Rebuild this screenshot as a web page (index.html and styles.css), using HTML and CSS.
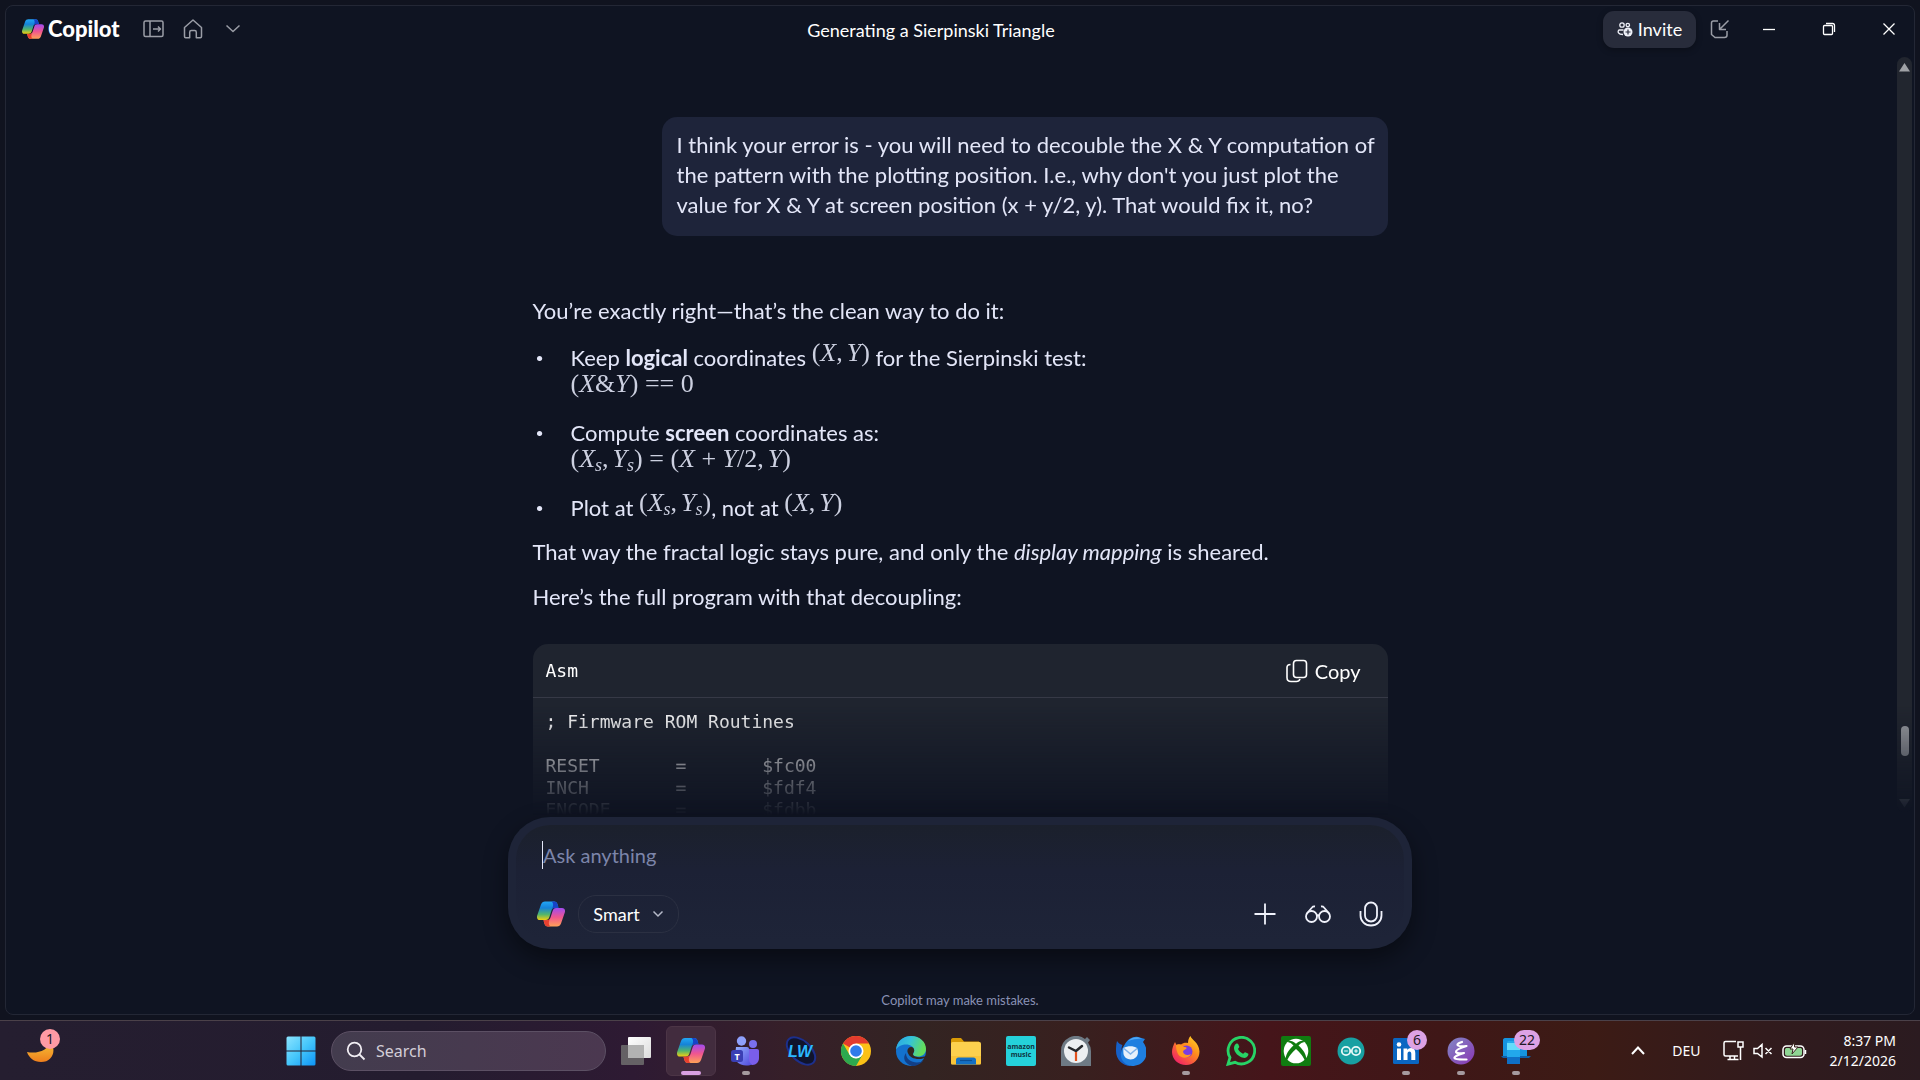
FILE: index.html
```html
<!doctype html>
<html lang="en">
	<head>
	<meta charset="utf-8">
	<title>Generating a Sierpinski Triangle</title>
	<link rel="stylesheet" href="styles.css">
	</head>

	<body>
	<!-- shared logo -->
	<svg class="defs" aria-hidden="true">
		<defs>
			<linearGradient id="cool" x1="0" y1="0" x2="0" y2="1">
				<stop offset="0" stop-color="#22a6f5"/><stop offset=".35" stop-color="#1583d8"/><stop offset=".7" stop-color="#53b56c"/><stop offset="1" stop-color="#f2cf10"/>
			</linearGradient>
			<linearGradient id="warm" x1="0" y1="1" x2="0" y2="0">
				<stop offset="0" stop-color="#a04bf0"/><stop offset=".5" stop-color="#f0568f"/><stop offset="1" stop-color="#ffa257"/>
			</linearGradient>
		</defs>
		<symbol id="copilot" viewBox="0 0 28 25">
			<path fill="url(#cool)" d="M8 0h9c2 0 3 1 3.600 3l.9 3.200H18c-2 0-3 1-3.600 3l-2 6.300c-.6 2-1.600 3-3.600 3H3c-2.500 0-3.500-2-2.800-4.500L4 3C4.800 1 6 0 8 0z"/>
			<path fill="#1743c8" d="M14.500 0H17c2 0 3 1 3.600 3l.9 3.200H18c-1.600 0-2.600.8-3.300 2.200C16.500 5 16.800 1.500 14.500 0z"/>
			<path fill="url(#warm)" transform="rotate(180 14 12.500)" d="M8 0h9c2 0 3 1 3.600 3l.9 3.200H18c-2 0-3 1-3.600 3l-2 6.300c-.6 2-1.600 3-3.600 3H3c-2.500 0-3.500-2-2.800-4.500L4 3C4.800 1 6 0 8 0z"/>
			<path fill="#e8402f" d="M13.500 25H11c-2 0-3-1-3.600-3l-.9-3.200H10c1.600 0 2.600-.8 3.300-2.200-1.800 3.400-2.100 6.900.2 8.400z"/>
		</symbol>
	</svg>

	<div class="window">
		<header class="titlebar">
			<div class="brand">
				<svg class="logo" width="22" height="20"><use href="#copilot"/></svg>
				<span class="name">Copilot</span>
				<button class="tool" aria-label="Open sidebar"><svg width="22" height="18" viewBox="0 0 22 18"><rect x="1" y="1" width="19" height="15.500" rx="1.500"/><path d="M7 1v15.500M10 9h7.500M15 6.500 17.500 9 15 11.500"/></svg></button>
				<button class="tool home" aria-label="Home"><svg width="20" height="20" viewBox="0 0 20 20"><path d="M1.500 8.500 10 1l8.500 7.500v9c0 .8-.5 1.200-1.200 1.200h-4v-5.500c0-1-.6-1.700-1.600-1.700H8.300c-1 0-1.600.7-1.600 1.700v5.500h-4c-.7 0-1.200-.4-1.200-1.200z"/></svg></button>
				<button class="tool" aria-label="More"><svg width="16" height="10" viewBox="0 0 16 10"><path d="m1.500 1.500 6.500 6 6.500-6"/></svg></button>
			</div>
			<h1>Generating a Sierpinski Triangle</h1>
			<div class="controls">
				<button class="invite">
					<svg width="16" height="15" viewBox="0 0 16 15"><g fill="none" stroke="#eef0f8" stroke-width="1.300"><circle cx="5" cy="3" r="2.200"/><circle cx="10.800" cy="3" r="1.700"/><path d="M6.500 8H2C.4 9.500 1 12.500 6 12.500"/></g><circle cx="11" cy="10" r="4.500" fill="#eef0f8"/><path d="M11 7.500v5M8.500 10h5" stroke="#292d3e" stroke-width="1.200"/></svg>
					Invite
				</button>
				<button class="tool mini" aria-label="Mini view"><svg width="20" height="20" viewBox="0 0 20 20"><path d="M8 2H3.500C2.200 2 1.500 2.800 1.500 4v11.500L5 18.500h9.500c1.500 0 2.500-.8 2.500-2.200V12M18.500 1.500 9.500 10.500M9.500 4v6.500H16"/></svg></button>
				<button class="caption" aria-label="Minimize"><svg width="14" height="14" viewBox="0 0 14 14"><path d="M1 7.500h12"/></svg></button>
				<button class="caption" aria-label="Restore"><svg width="14" height="14" viewBox="0 0 14 14"><rect x="1.500" y="3.500" width="9" height="9" rx="1"/><path d="M4 1.500h6.500c1.300 0 2 .7 2 2V10"/></svg></button>
				<button class="caption" aria-label="Close"><svg width="14" height="14" viewBox="0 0 14 14"><path d="m1.500 1.500 11 11M12.500 1.500l-11 11"/></svg></button>
			</div>
		</header>

		<main class="scroller">
			<div class="chat">
				<div class="bubble">I think your error is - you will need to decouble the X &amp; Y computation of the pattern with the plotting position. I.e., why don't you just plot the value for X &amp; Y at screen position (x + y/2, y). That would fix it, no?</div>
				<div class="reply">
					<p>You’re exactly right—that’s the clean way to do it:</p>
					<ul>
						<li><div>Keep <strong>logical</strong> coordinates <span class="math raised">(<i>X</i><b>,</b><i>Y</i>)</span> for the Sierpinski test:
							<div class="math">(<i>X</i>&amp;<i>Y</i>) == 0</div></div></li>
						<li><div>Compute <strong>screen</strong> coordinates as:
							<div class="math">(<i>X</i><sub>s</sub><b>,</b><i>Y</i><sub>s</sub>) = (<i>X</i> + <i>Y</i>/2<b>,</b><i>Y</i>)</div></div></li>
						<li><div>Plot at <span class="math raised">(<i>X</i><sub>s</sub><b>,</b><i>Y</i><sub>s</sub>)</span>, not at <span class="math raised">(<i>X</i><b>,</b><i>Y</i>)</span></div></li>
					</ul>
					<p>That way the fractal logic stays pure, and only the <em>display mapping</em> is sheared.</p>
					<p>Here’s the full program with that decoupling:</p>
					<div class="code">
						<div class="code-head">
							<span>Asm</span>
							<button class="copy">
								<svg width="24" height="24" viewBox="0 0 24 24"><rect x="8.500" y="1.500" width="13" height="17" rx="3"/><path d="M5.500 5.500C3 5.500 2 6.800 2 8.500v10c0 2.500 1.500 4 4 4h5.500c2 0 3-1 3.500-2.500"/></svg>
								Copy
							</button>
						</div>
<pre>; Firmware ROM Routines

RESET       =       $fc00
INCH        =       $fdf4
ENCODE      =       $fdbb
</pre>
					</div>
				</div>
			</div>
			<div class="scrollbar" aria-hidden="true">
				<svg width="11" height="9" viewBox="0 0 11 9"><path d="M5.500 0 11 8.500H0z"/></svg>
				<div class="thumb"></div>
				<svg class="down" width="11" height="9" viewBox="0 0 11 9"><path d="M5.500 8.500 11 0H0z"/></svg>
			</div>
		</main>

		<form class="composer">
			<div class="inner">
				<input type="text" placeholder="Ask anything" aria-label="Ask anything">
				<div class="actions">
					<svg width="28" height="26"><use href="#copilot"/></svg>
					<button type="button" class="smart">Smart <svg width="12" height="8" viewBox="0 0 12 8"><path d="m1.500 1.500 4.500 4.500 4.500-4.500"/></svg></button>
					<button type="button" class="act first" aria-label="Add"><svg width="24" height="24" viewBox="0 0 24 24"><path d="M12 1.500v21M1.500 12h21"/></svg></button>
					<button type="button" class="act" aria-label="Vision"><svg width="28" height="24" viewBox="0 0 28 24"><circle cx="7.500" cy="14.500" r="5.500"/><circle cx="20.500" cy="14.500" r="5.500"/><path d="M13 14c.5-1 1.500-1 2 0M2.500 12 8 5.500c.8-1 1.700-1.200 3-1M25.500 12 20 5.500c-.8-1-1.700-1.200-3-1"/></svg></button>
					<button type="button" class="act" aria-label="Talk"><svg width="24" height="26" viewBox="0 0 24 26"><rect x="6" y="1.500" width="12" height="19" rx="6"/><path d="M1.500 10v4.500C1.500 20 6 24.500 12 24.500S22.500 20 22.500 14.500V10"/></svg></button>
				</div>
			</div>
		</form>
		<p class="note">Copilot may make mistakes.</p>
	</div>

	<footer class="taskbar">
		<div class="widgets">
			<button class="moon" aria-label="Weather">
				<svg width="30" height="30" viewBox="0 0 30 30"><defs><linearGradient id="mn" x1="0" y1="0" x2="0" y2="1"><stop offset="0" stop-color="#f6c93a"/><stop offset="1" stop-color="#ef7f1d"/></linearGradient></defs><path fill="url(#mn)" d="M24 4c7 10 3 22-9 22C8 26 3 22 1 16c10 2 22-1 23-12z"/></svg>
				<span class="badge pink">1</span>
			</button>
		</div>
		<nav class="apps">
			<button class="app" aria-label="Start"><svg width="30" height="30" viewBox="0 0 30 30"><defs><linearGradient id="win" x1="0" y1="0" x2="1" y2="1"><stop offset="0" stop-color="#8ce4ff"/><stop offset=".5" stop-color="#45c6fb"/><stop offset="1" stop-color="#0d93f5"/></linearGradient></defs><path fill="url(#win)" d="M2 .5h12.500v14H.5V2A1.500 1.500 0 0 1 2 .5zM15.500.5H28A1.500 1.500 0 0 1 29.500 2v12.500h-14zM.5 15.500h14v14H2A1.500 1.500 0 0 1 .5 28zM15.500 15.500h14V28a1.500 1.500 0 0 1-1.500 1.500H15.500z"/></svg></button>
			<label class="search">
				<svg width="20" height="20" viewBox="0 0 20 20"><circle cx="8.500" cy="8.500" r="6.800"/><path d="m13.500 13.500 5 5"/></svg>
				<input type="text" placeholder="Search" aria-label="Search">
			</label>
			<button class="app" aria-label="Task view"><svg width="30" height="30" viewBox="0 0 30 30"><defs><linearGradient id="tv" x1="0" y1="0" x2="1" y2="1"><stop offset="0" stop-color="#fff"/><stop offset="1" stop-color="#dcdcdc"/></linearGradient></defs><rect x="7" y="1" width="23" height="21" rx="1" fill="url(#tv)"/><rect y="9" width="23" height="20" rx="1" fill="#6f6f6f" opacity=".85"/><rect x="7" y="9" width="16" height="13" fill="#b2b2b2"/></svg></button>
			<button class="app active" aria-label="Copilot"><svg width="28" height="25"><use href="#copilot"/></svg></button>
			<button class="app running" aria-label="Teams"><svg width="30" height="30" viewBox="0 0 30 30"><defs><linearGradient id="tm" x1="0" y1="0" x2="1" y2="1"><stop offset="0" stop-color="#95b1ff"/><stop offset="1" stop-color="#5049dc"/></linearGradient></defs><circle cx="22" cy="8" r="4" fill="#7a70ee"/><path fill="#7a5eea" d="M17 13h9c1.200 0 2 .8 2 2v7c0 4-3 7-6.500 7S17 26 17 22z"/><circle cx="10.500" cy="5" r="4.700" fill="#8ea0fb"/><path fill="url(#tm)" d="M5 11h11c1.200 0 2 .8 2 2v10c0 3 1.500 4.500 3 5.500-1 .5-3 1-6 1C9 29.500 4 26 4 20z"/><rect y="14" width="12" height="12" rx="2.500" fill="#3a3fb4"/><text x="6" y="23.500" class="glyph" font-size="9">T</text></svg></button>
			<button class="app" aria-label="LW"><svg width="32" height="30" viewBox="0 0 32 30"><ellipse cx="16" cy="15" rx="17" ry="10" transform="rotate(43 16 15)" fill="#10142c" stroke="#1c2f8c" stroke-width="2"/><text x="3" y="21" class="lw" font-size="16">LW</text></svg></button>
			<button class="app" aria-label="Chrome"><svg width="30" height="30" viewBox="0 0 30 30"><circle cx="15" cy="15" r="15" fill="#fbc117"/><path fill="#e33b2e" d="M15 15 2 7.500A15 15 0 0 1 28 7.500H15z"/><path fill="#2da94f" d="M2 7.500 8.500 18.700 15 22.500 21.500 18.700 15 30A15 15 0 0 1 2 7.500z"/><circle cx="15" cy="15" r="7.500" fill="#fff"/><circle cx="15" cy="15" r="5.800" fill="#2f7bea"/></svg></button>
			<button class="app" aria-label="Edge"><svg width="30" height="30" viewBox="0 0 30 30"><defs><linearGradient id="ed" x1="0" y1="0" x2="1" y2=".3"><stop offset="0" stop-color="#2aa4e6"/><stop offset=".5" stop-color="#35c3d8"/><stop offset="1" stop-color="#63dd5c"/></linearGradient></defs><circle cx="15" cy="15" r="15" fill="#1372cf"/><path fill="url(#ed)" d="M0 14C.5 5.500 7 0 15 0c9 0 15 6 15 13 0 5-4 7.500-8 7.500-3 0-5-.8-5-2 0-.6 1.200-1.500 1.200-4 0-3.500-3.700-6-8.200-6C5 8.500 1 11 0 14z"/><path fill="#123f86" d="M10 17c0 6 5 9.500 11 9.500 3 0 5-1 6.500-2C25 28 20.500 30 16 30 9 28 6 22 10 17z"/><path fill="#33261f" d="M17 18.500c-.3-1.500 1.200-2 1.200-4 0-2-1.200-3.500-3-3.500-3 0-4.500 3-3.500 5.500 1.500 4.500 6 6.500 11 6.500 4 0 7.300-1 8.300-3.500-4 2.200-13 2.500-14-1z"/></svg></button>
			<button class="app" aria-label="File Explorer"><svg width="30" height="30" viewBox="0 0 30 30"><path fill="#d99a06" d="M0 4c0-1 .6-2 2-2h8l3 3.500H28V12H0z"/><rect y="6" width="30" height="22.500" rx="1.500" fill="#fcd04e"/><path fill="#f7bd2c" d="M0 20h30v7c0 1-.6 1.500-1.500 1.500h-27C.6 28.500 0 28 0 27z" opacity=".6"/><path fill="#1470c4" d="M5 28.500V24c0-1.500.8-2.500 2.500-2.500h15c1.700 0 2.500 1 2.500 2.500v4.500z"/><path stroke="#0b4f96" stroke-width="1.200" d="M9 24.500h12"/></svg></button>
			<button class="app" aria-label="Amazon Music"><span class="amazon"><span>amazon</span><span>music</span></span></button>
			<button class="app" aria-label="Clock"><svg width="30" height="30" viewBox="0 0 30 30"><path fill="#6e7a84" d="M0 15a15 15 0 0 1 24-12l2-2 3 3-2 2.500A15 15 0 0 1 30 15v15H0z"/><circle cx="15" cy="15" r="12" fill="#eceff1"/><path fill="none" stroke="#25282b" stroke-width="2.500" stroke-linecap="round" d="m8 11.500 7 3.500 6-5"/><path stroke="#e2521d" stroke-width="2.200" d="M15 16v9"/></svg></button>
			<button class="app" aria-label="Thunderbird"><svg width="30" height="30" viewBox="0 0 30 30"><path fill="#1660c8" d="M1 5c1.500 2.500 3.500 3.500 5.500 4C5 12 5 18 8 22l7 8C6 30 0 23 0 15c0-4 .2-7 1-10z"/><path fill="#1f7fe0" d="M9 8c3-5 8-8 13-7l7 2-2 3c4 5 5 12 2 17-3 5-8 7-13 7C9 29 4 24 5 17c.3-3.500 2-6 4-9z"/><path fill="#50a8f5" d="M12 5c3-3 7-4.500 11-3.500l3 1.500c-4-.5-8 0-14 2z"/><path fill="#e8f1fb" d="M7.500 12c4-2.500 10-2.500 13.500 0 2 4 1 9-3.500 11-5 1.500-9-1-10-5-.3-2-.3-4 0-6z"/><path fill="none" stroke="#7fb2ea" stroke-width="1.500" d="m8 12.500 6.500 5.500 6.500-5.500"/></svg></button>
			<button class="app running" aria-label="Firefox"><svg width="30" height="30" viewBox="0 0 30 30"><defs><linearGradient id="ff" x1="1" y1="0" x2=".2" y2="1"><stop offset="0" stop-color="#ffe226"/><stop offset=".45" stop-color="#ff8a1e"/><stop offset="1" stop-color="#f01c6a"/></linearGradient></defs><path fill="url(#ff)" d="M17 7c0-3 1-5.500 2.500-7 1 4 8.500 6 9 15.500C28.500 23 23 29 15 29S1 23 1 16c0-4 1.500-7 3-10l1.500 3c1-.5 3-1 4.500-.5 2-1.500 4-2 7-1.500z"/><circle cx="15.500" cy="15.500" r="6" fill="#7a3de0"/><path fill="#ff9a20" d="M5 9c4-1 6 0 8 2 2 0 3 .5 2.500 1.500-1 1.500-3 1-3.500 3 .5 3 4 4.500 8 2.500-2 5-10 5-13 0-1.500-3-2-6-2-9z"/></svg></button>
			<button class="app" aria-label="WhatsApp"><svg width="30" height="30" viewBox="0 0 30 30"><path fill="none" stroke="#27d366" stroke-width="2.800" d="M2 28.200 4 21.500A13.300 13.300 0 1 1 9 26.300z"/><path fill="#27d366" d="M10.500 7.500c.8-.3 1.500 0 1.800.8l1 2.500c.2.700-1.300 1.800-1.300 2.200 1 2.200 2.700 3.700 5 4.700.5.2 1.500-1.700 2.200-1.500l2.800 1.300c.5.300.5 1 .2 1.800-.8 2-3 3-5 2.500C12 20.500 8.500 16.500 8 12.500c-.2-2 1-4.300 2.500-5z"/></svg></button>
			<button class="app" aria-label="Xbox"><svg width="30" height="30" viewBox="0 0 30 30"><rect width="30" height="30" rx="2" fill="#107c10"/><circle cx="15" cy="15" r="12.300" fill="#fff"/><path fill="#107c10" d="M7 5c2.500-.8 5.500.7 8 2.700 2.500-2 5.500-3.500 8-2.700l-.5 1.500C21 6 19 8 17.500 9.500 22 13.500 26 19 25 23.500l-1 1.500C22.500 20.500 18.500 16 15 13 11.500 16 7.500 20.500 6 25l-1-1.500C4 19 8 13.500 12.500 9.500 11 8 9 6 7.500 6.500z"/></svg></button>
			<button class="app" aria-label="Arduino"><svg width="28" height="28" viewBox="0 0 28 28"><circle cx="14" cy="14" r="13.500" fill="#18a0a2"/><g fill="none" stroke="#e9f8f8" stroke-width="1.800"><circle cx="9" cy="14" r="4.200"/><circle cx="19" cy="14" r="4.200"/></g><path stroke="#e9f8f8" stroke-width="1.200" d="M7.200 14h3.600M17.200 14h3.600M19 12.200v3.600"/></svg></button>
			<button class="app running" aria-label="LinkedIn"><svg width="26" height="26" viewBox="0 0 26 26"><rect width="26" height="26" rx="1.500" fill="#0a66c2"/><g fill="#fff"><circle cx="6" cy="6.500" r="2.300"/><path d="M4 10.500h4V22H4zM10.500 10.500h3.800v1.600c.8-1.300 2-2 3.700-2 3 0 4.300 1.900 4.300 5.200V22h-4v-6c0-1.600-.6-2.500-1.800-2.500-1.300 0-2 .9-2 2.500v6h-4z"/></g></svg><span class="badge">6</span></button>
			<button class="app running" aria-label="Emacs"><svg width="28" height="28" viewBox="0 0 28 28"><defs><linearGradient id="em" x1="0" y1="0" x2="1" y2="1"><stop offset="0" stop-color="#8189c4"/><stop offset="1" stop-color="#8a35b4"/></linearGradient></defs><circle cx="14" cy="14" r="13.500" fill="url(#em)"/><path fill="none" stroke="#fff" stroke-width="2.200" stroke-linecap="round" stroke-linejoin="round" d="M15 5c-3 1-5 2-4.500 3 .8 1.200 5 1.500 9 1-5 1.500-11 4-10.500 6 .5 1.300 4 1.500 8 1-5 1.500-10 3.500-9.500 5 .8 1.800 6 1.500 12 1.500"/></svg></button>
			<button class="app running" aria-label="Phone Link"><svg width="30" height="30" viewBox="0 0 30 30"><path fill="#1593de" d="M2 4c0-1 .6-2 2-2h22v18H2z"/><path fill="#0e5ea8" d="M0 20h30l-2 2H2z"/><rect x="6" y="5" width="13" height="23" rx="1.500" fill="#22a8ec"/><path fill="#66dcfb" d="M6 7h13v7H6z"/><path fill="#0f6fc6" d="M6 21h13v5.500c0 1-.5 1.500-1.500 1.500h-10C6.500 28 6 27.500 6 26.500z"/></svg><span class="badge wide">22</span></button>
		</nav>
		<div class="tray">
			<button class="up" aria-label="Show hidden icons"><svg width="14" height="9" viewBox="0 0 14 9"><path d="m1 8 6-6.500L13 8"/></svg></button>
			<span class="lang">DEU</span>
			<div class="status">
				<svg width="21" height="21" viewBox="0 0 21 21"><path d="M13 1.500H2.500C1.500 1.500 1 2 1 3v11.500c0 1 .5 1.500 1.500 1.500H15M7 16v3.500M11.500 16v3.500M4.500 19.500h11M15 2h5v5h-5zM17.500 7v13"/></svg>
				<svg width="20" height="16" viewBox="0 0 20 16"><path d="M1 5.500h3.500L9 1.500v12.500L4.500 10.500H1zM12.500 5l6 6M18.500 5l-6 6"/></svg>
				<svg width="25" height="18" viewBox="0 0 25 18"><rect x="1" y="4" width="21" height="11.500" rx="3.500"/><path class="cell" d="M5 6h13c1.200 0 2 .6 2 1.700v4c0 1.200-.8 2-2 2H5c-1.200 0-2-.8-2-2v-4C3 6.600 3.800 6 5 6z"/><path d="M23.500 8v4"/><path class="bolt" d="M12.500 0 8 7h3l-1 5 6-7h-3.500z"/></svg>
			</div>
			<div class="clock">8:37 PM<br>2/12/2026</div>
		</div>
	</footer>
</body>
</html>
```

FILE: styles.css
```css
* {
	box-sizing: border-box;
}
body {
	margin: 0;
	height: 100vh;
	display: flex;
	flex-direction: column;
	background: #10131f;
	color: #e3e6f8;
	font-family: Lato, "Noto Sans", sans-serif;
	overflow: hidden;
}
button {
	display: flex;
	align-items: center;
	justify-content: center;
	padding: 0;
	border: 0;
	background: none;
	color: inherit;
	font: inherit;
}
input {
	border: 0;
	padding: 0;
	background: none;
	font: inherit;
	color: inherit;
	outline: none;
}
.defs {
	position: absolute;
	width: 0;
	height: 0;
}

/* window */
.window {
	flex: 1;
	min-height: 0;
	margin: 5px;
	display: flex;
	flex-direction: column;
	border: 1px solid #232735;
	border-radius: 8px;
	background: #0f1422;
}
.titlebar {
	display: grid;
	grid-template-columns: 1fr auto 1fr;
	align-items: center;
	height: 48px;
	padding-bottom: 2px;
	font-size: 18px;
}
.titlebar h1 {
	margin: 0 58px 0 0;
	padding-top: 2px;
	font-size: 18px;
	font-weight: normal;
	color: #fff;
}
.brand {
	display: flex;
	align-items: center;
	padding-left: 16px;
}
.logo {
	margin-right: 4px;
}
.name {
	width: 95px;
	font-size: 22px;
	line-height: 26px;
	font-weight: 900;
	color: #fff;
}
.tool svg {
	fill: none;
	stroke: #9a9da6;
	stroke-width: 1.5;
	stroke-linejoin: round;
}
.home {
	margin: 0 22px 0 18px;
}
.controls {
	display: flex;
	align-items: center;
	justify-content: flex-end;
	padding-right: 18px;
}
.invite {
	width: 93px;
	height: 37px;
	gap: 5px;
	border-radius: 11px;
	background: #282c3b;
	box-shadow: 0 2px 6px rgba(0, 0, 0, .3);
	color: #fff;
}
.mini {
	margin: 0 32px 0 14px;
}
.caption svg {
	fill: none;
	stroke: #fff;
	stroke-width: 1.3;
}
.caption + .caption {
	margin-left: 46px;
}

/* conversation */
.scroller {
	flex: 1;
	min-height: 0;
	display: flex;
	padding-left: 17px;
	overflow: hidden;
	-webkit-mask-image: linear-gradient(to top, transparent 2px, #000 112px);
	mask-image: linear-gradient(to top, transparent 2px, #000 112px);
}
.chat {
	width: 855px;
	margin: 0 auto;
	padding: 63px 0 0;
	font-size: 22px;
	line-height: 30px;
}
.bubble {
	width: 726px;
	margin-left: auto;
	padding: 13px 6px 16px 15px;
	border-radius: 15px;
	background: #1e243a;
}
.reply {
	margin-top: 60px;
}
.reply p {
	margin: 0 0 15px;
}
.reply ul {
	margin: 17px 0 14px;
	padding: 0;
	list-style: none;
}
.reply li {
	display: grid;
	grid-template-columns: 38px 1fr;
	margin-bottom: 18px;
}
.reply li:last-child {
	margin-bottom: 0;
}
.reply li::before {
	content: "•";
	padding-left: 3px;
	font-size: 14px;
}
.math {
	height: 27px;
	font-family: "Liberation Serif", serif;
	font-size: 26px;
	line-height: 22px;
	color: #ccd0e0;
}
.math b {
	margin-right: 4px;
	font-weight: normal;
}
.math sub {
	font-size: 18px;
	font-style: italic;
	line-height: 0;
	vertical-align: -4px;
}
.raised {
	line-height: 0;
	vertical-align: 5px;
}
.code {
	margin-top: 32px;
	border-radius: 15px 15px 0 0;
	background: #1f242f;
	color: #fff;
	font-family: "DejaVu Sans Mono", monospace;
	font-size: 18px;
}
.code-head {
	display: flex;
	align-items: center;
	justify-content: space-between;
	height: 54px;
	padding: 0 27px 0 13px;
	border-bottom: 1px solid #363946;
}
.copy {
	gap: 6px;
	font-family: Lato, sans-serif;
	font-size: 20px;
}
.copy svg {
	fill: none;
	stroke: #fff;
	stroke-width: 1.6;
}
.code pre {
	margin: 0;
	padding: 13px;
	height: 200px;
	font: inherit;
	line-height: 22px;
}
.scrollbar {
	display: flex;
	flex-direction: column;
	align-items: center;
	width: 15px;
	margin: 3px 2px 5px 0;
	padding: 6px 0 4px;
	border-radius: 8px;
	background: #22262f;
}
.scrollbar svg {
	fill: #a0a2a6;
}
.thumb {
	width: 8px;
	height: 30px;
	margin: auto 0 43px;
	border-radius: 4px;
	background: #a0a2a6;
}

/* composer */
.composer {
	width: 904px;
	margin: 0 auto;
	padding: 8px;
	border-radius: 42px;
	background: #1e2438;
	box-shadow: 0 10px 24px rgba(0, 0, 0, .45);
}
.inner {
	padding: 16px 21px 8px 21px;
	border-radius: 34px;
	background: linear-gradient(#1b202c, #1c2135 40%, #1e2438);
}
.composer input {
	display: block;
	width: 100%;
	height: 28px;
	margin-left: 5px;
	border-left: 1px solid #e3e6f8;
	font-size: 20px;
}
.composer input::placeholder {
	color: #7c85aa;
	opacity: 1;
}
.actions {
	display: flex;
	align-items: center;
	margin-top: 26px;
}
.smart {
	width: 101px;
	height: 38px;
	gap: 12px;
	margin-left: 13px;
	border: 1px solid #2b3042;
	border-radius: 18px;
	font-size: 18px;
	color: #fff;
}
.smart svg {
	fill: none;
	stroke: #b5b9c8;
	stroke-width: 1.5;
}
.act {
	margin-left: 27px;
}
.first {
	margin-left: auto;
}
.act svg {
	fill: none;
	stroke: #f0f2fb;
	stroke-width: 1.8;
}
.note {
	margin: 42px 0 5px;
	font-size: 13px;
	line-height: 18px;
	text-align: center;
	color: #8a92b5;
}

/* taskbar */
.taskbar {
	display: flex;
	align-items: center;
	height: 60px;
	border-top: 1px solid #4b4149;
	background: linear-gradient(to right, #251e30, #241c2f 22%, #2e1a33 33%, #361f29 41%, #332422 48%, #38201f 56%, #45151a 66%, #3f1717 75%, #3c1b15 83%, #311b1d 92%, #2b1b20);
	color: #fff;
	font-family: "Noto Sans", sans-serif;
}
.widgets {
	width: 276px;
	padding-left: 26px;
}
.moon {
	position: relative;
}
.apps {
	display: flex;
	align-items: center;
	gap: 5px;
}
.app {
	position: relative;
	width: 50px;
	height: 50px;
	border-radius: 6px;
}
.active {
	border: 1px solid #4c3546;
	background: #422c3e;
}
.running::after,
.active::after {
	content: "";
	position: absolute;
	bottom: 1px;
	left: 21px;
	width: 8px;
	height: 4px;
	border-radius: 2px;
	background: #a59a9f;
}
.active::after {
	bottom: 0;
	left: 14px;
	width: 20px;
	background: #d9a0e3;
}
.search {
	display: flex;
	align-items: center;
	gap: 10px;
	width: 275px;
	height: 40px;
	padding: 0 14px;
	border: 1px solid #5c5064;
	border-radius: 20px;
	background: linear-gradient(to right, #433c4e, #4b3850);
	font-size: 16px;
}
.search svg {
	fill: none;
	stroke: #f1eef3;
	stroke-width: 1.8;
}
.search input {
	width: 200px;
}
.search input::placeholder {
	color: #d3ced7;
	opacity: 1;
}
.badge {
	position: absolute;
	top: 4px;
	right: 4px;
	width: 20px;
	height: 20px;
	border-radius: 10px;
	background: #dda2e5;
	color: #201824;
	font-size: 14px;
	line-height: 20px;
	text-align: center;
}
.wide {
	right: 1px;
	width: 26px;
}
.pink {
	top: -7px;
	right: -4px;
	background: #ff9aa4;
}
.glyph {
	fill: #fff;
	font-family: "Open Sans", sans-serif;
	font-weight: bold;
	text-anchor: middle;
}
.lw {
	fill: #2bb8ff;
	font-family: "Liberation Sans", sans-serif;
	font-weight: bold;
	font-style: italic;
}
.amazon {
	display: flex;
	flex-direction: column;
	justify-content: center;
	width: 30px;
	height: 30px;
	border-radius: 2px;
	background: #25d1da;
	color: #0e3340;
	font-size: 7px;
	font-family: "Open Sans", sans-serif;
	font-weight: bold;
	line-height: 8px;
	text-align: center;
}
.tray {
	display: flex;
	align-items: center;
	margin-left: auto;
	padding-right: 24px;
	font-size: 14px;
	line-height: 20px;
}
.tray svg {
	fill: none;
	stroke: #fff;
	stroke-width: 1.5;
}
.up svg {
	stroke-width: 2;
}
.lang {
	margin: 0 22px 0 27px;
}
.status {
	display: flex;
	align-items: center;
	gap: 9px;
	margin-right: 23px;
}
.status .cell {
	fill: #8fd694;
	stroke: none;
}
.status .bolt {
	fill: #fff;
	stroke: #3a2620;
	stroke-width: 1;
}
.clock {
	text-align: right;
}
```
